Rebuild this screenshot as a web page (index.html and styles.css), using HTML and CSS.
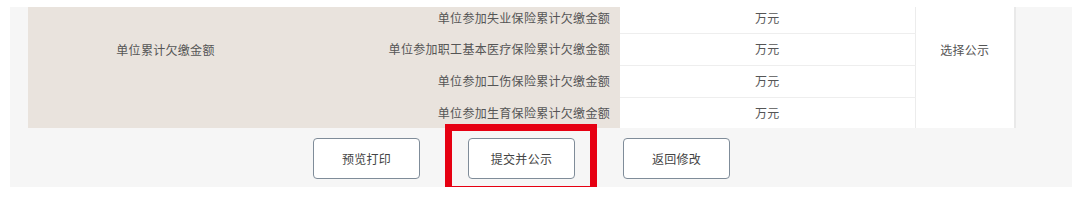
FILE: index.html
```html
<!DOCTYPE html>
<html lang="zh-CN">
<head>
<meta charset="utf-8">
<link rel="stylesheet" href="styles.css">
</head>
<body>
<div class="panel">
  <table class="grid">
    <colgroup>
      <col class="c1"><col class="c2"><col class="c3"><col class="c4">
    </colgroup>
    <tbody>
      <tr class="r1">
        <td class="label main" rowspan="4">单位累计欠缴金额</td>
        <td class="label sub">单位参加失业保险累计欠缴金额</td>
        <td class="val">万元</td>
        <td class="pick" rowspan="4">选择公示</td>
      </tr>
      <tr class="r2">
        <td class="label sub">单位参加职工基本医疗保险累计欠缴金额</td>
        <td class="val">万元</td>
      </tr>
      <tr class="r3">
        <td class="label sub">单位参加工伤保险累计欠缴金额</td>
        <td class="val">万元</td>
      </tr>
      <tr class="r4">
        <td class="label sub">单位参加生育保险累计欠缴金额</td>
        <td class="val last">万元</td>
      </tr>
    </tbody>
  </table>
  <div class="actions">
    <button class="btn">预览打印</button>
    <span class="mark"><button class="btn">提交并公示</button></span>
    <button class="btn">返回修改</button>
  </div>
</div>
</body>
</html>
```

FILE: styles.css
```css
html, body {
  margin: 0;
  padding: 0;
  background: #ffffff;
  font-family: "Noto Sans CJK SC", "Noto Sans", sans-serif;
}

.panel {
  margin: 7px 0 0 10px;
  width: 1062px;
  height: 180px;
  padding-left: 18px;
  box-sizing: border-box;
  background: #f6f6f6;
}

.grid {
  width: 987px;
  table-layout: fixed;
  border-collapse: collapse;
  font-size: 12px;
  letter-spacing: 0.3px;
  color: #555;
}

.c1 { width: 275px; }
.c2 { width: 317px; }
.c3 { width: 295px; }
.c4 { width: 100px; }

.grid td {
  padding: 0;
  line-height: 16px;
}

.r1 { height: 26px; }
.r2 { height: 32px; }
.r3 { height: 32px; }
.r4 { height: 31px; }

.r1 td.sub, .r1 td.val { padding-bottom: 4px; }

.label {
  background: #e9e3dd;
}

.main {
  text-align: center;
  padding-bottom: 35px !important;
}

.sub {
  text-align: right;
  padding-right: 10px !important;
}

.val {
  background: #ffffff;
  text-align: center;
  border-bottom: 1px solid #eeeeee;
  border-right: 1px solid #ececec;
}

.val.last { border-bottom: none; }

.pick {
  background: #ffffff;
  text-align: center;
  border-right: 2px solid #e9e9e9;
  padding-bottom: 35px !important;
}

.actions {
  display: flex;
  align-items: flex-start;
  justify-content: center;
  gap: 48px;
  width: 987px;
  padding-top: 10px;
}

.btn {
  display: block;
  width: 107px;
  height: 41px;
  background: #ffffff;
  border: 1px solid #7f8c99;
  border-radius: 4px;
  font-family: "Noto Sans CJK SC", "Noto Sans", sans-serif;
  font-size: 12px;
  letter-spacing: 0.3px;
  color: #444;
  padding: 0;
}

.mark {
  position: relative;
  display: flex;
}

.mark::after {
  content: "";
  position: absolute;
  left: -23px;
  top: -14px;
  width: 152px;
  height: 69px;
  border: 7px solid #e60012;
  box-sizing: border-box;
  pointer-events: none;
}
```
